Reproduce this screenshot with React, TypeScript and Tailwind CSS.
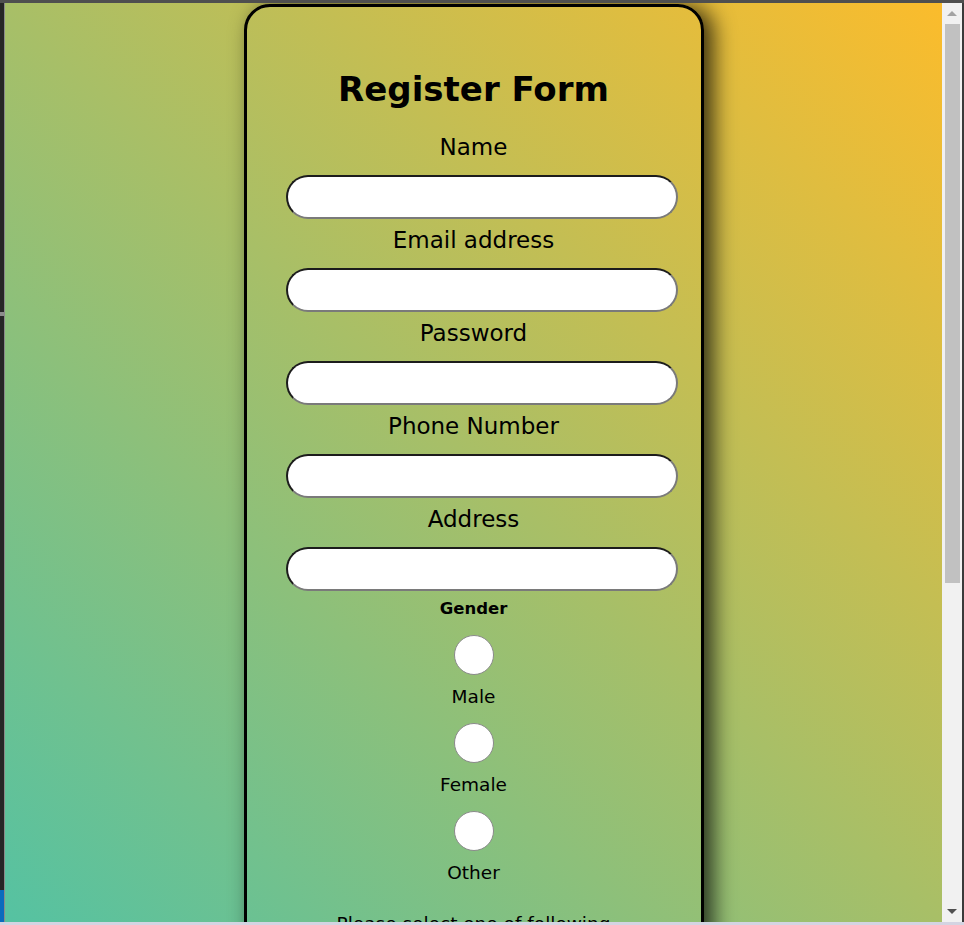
import React from "react";

const font = { fontFamily: "'Comic Sans MS', 'DejaVu Sans', sans-serif" };

function Field({ label, first }: { label: string; first?: boolean }) {
  return (
    <>
      <div className={`${first ? "mt-[21px]" : "mt-[4px]"} h-[34px] leading-[34px] text-[23px] text-black`}>{label}</div>
      <input
        type="text"
        className="mt-[11px] self-start ml-[39px] w-[392px] h-[44px] shrink-0 rounded-[22px] bg-white border-2 border-t-[#1c1c1c] border-l-[#1c1c1c] border-b-[#7a7a7a] border-r-[#7a7a7a] outline-none px-4"
      />
    </>
  );
}

function Radio({ label }: { label: string }) {
  return (
    <>
      <input
        type="radio"
        name="gender"
        className="mt-[14px] w-10 h-10 shrink-0 appearance-none rounded-full bg-white border border-[#8a8a8a]"
      />
      <div className="mt-[10px] h-[24px] leading-[24px] text-[18.5px] text-black">{label}</div>
    </>
  );
}

export default function App() {
  return (
    <div className="w-[964px] h-[925px] flex flex-col overflow-hidden bg-[#2b2b2b]" style={font}>
      <div className="h-[3px] bg-[#4f4f4f] shrink-0" />
      <div className="flex flex-1 min-h-0">
        <div className="w-[4px] flex flex-col shrink-0">
          <div className="h-[309px] bg-[#262626]" />
          <div className="h-[4px] bg-[#8c8c8c]" />
          <div className="flex-1 bg-[#262626]" />
          <div className="h-[32px] bg-[#0b6bbd]" />
        </div>
        <div className="w-[1px] bg-[#8a8a8a] shrink-0" />
        <div className="flex-1 min-w-0 overflow-hidden bg-[linear-gradient(to_top_right,#55c2a2,#fbbc2c)]">
          <div className="mx-auto mt-[1px] w-[460px] rounded-[26px] border-[3px] border-black shadow-[9px_2px_22px_rgba(0,0,0,0.75)] flex flex-col items-center pt-[62px] pb-10">
            <h1 className="h-[40px] leading-[40px] text-[34px] font-bold text-black">Register Form</h1>
            <Field label="Name" first />
            <Field label="Email address" />
            <Field label="Password" />
            <Field label="Phone Number" />
            <Field label="Address" />
            <div className="mt-[6px] h-[24px] leading-[24px] text-[16.5px] font-bold text-black">Gender</div>
            <Radio label="Male" />
            <Radio label="Female" />
            <Radio label="Other" />
            <div className="mt-[26px] h-[26px] leading-[26px] text-[18.5px] text-black">Please select one of following</div>
            <button className="mt-6 px-8 py-2 rounded-full bg-white border-2 border-black text-[18px]">Register</button>
          </div>
        </div>
        <div className="w-[20px] shrink-0 bg-[#f1f1f1] flex flex-col items-center">
          <div className="h-[21px] flex items-center justify-center">
            <div className="w-0 h-0 border-l-[5px] border-r-[5px] border-b-[5px] border-l-transparent border-r-transparent border-b-[#a3a3a3]" />
          </div>
          <div className="w-[15px] h-[559px] bg-[#c1c1c1]" />
          <div className="flex-1" />
          <div className="h-[21px] flex items-center justify-center">
            <div className="w-0 h-0 border-l-[5px] border-r-[5px] border-t-[5px] border-l-transparent border-r-transparent border-t-[#505050]" />
          </div>
        </div>
        <div className="w-[2px] bg-[#3a3a3a] shrink-0" />
      </div>
      <div className="h-[3px] bg-[#d4d4e2] shrink-0" />
    </div>
  );
}
